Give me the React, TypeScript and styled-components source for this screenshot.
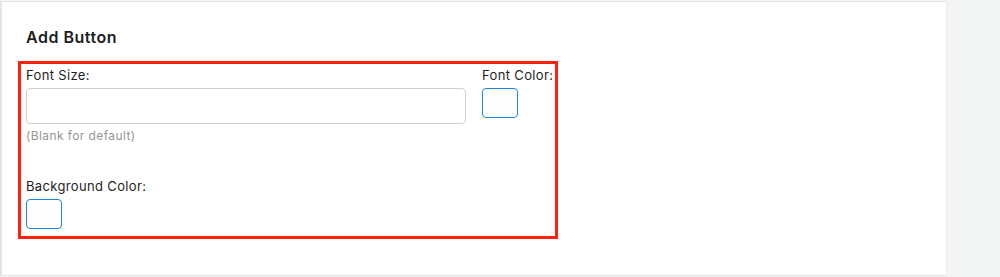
import styled, { createGlobalStyle } from 'styled-components';

const GlobalStyle = createGlobalStyle`
  html, body {
    margin: 0;
    padding: 0;
    background: #f4f5f5;
    font-family: Inter, "Liberation Sans", Arial, sans-serif;
    color: #1e1e1e;
  }
`;

const Page = styled.div`
  display: flex;
  height: 277px;
  padding-top: 1px;
  box-sizing: border-box;
`;

const Card = styled.section`
  width: 946px;
  height: 275px;
  box-sizing: border-box;
  background: #fff;
  border: 1px solid #e2e4e7;
  border-left-width: 2px;
  border-right: none;
  padding: 24px 0 0 16px;
`;

const Title = styled.h2`
  margin: 0 0 13px 8px;
  font-size: 16px;
  font-weight: 600;
  line-height: 22px;
  letter-spacing: 0.5px;
  color: #1e1e1e;
`;

const Highlight = styled.div`
  width: 540px;
  height: 178px;
  box-sizing: border-box;
  border: 3px solid #ff2211;
  padding: 2px 2px 0 5px;
  display: flex;
  gap: 16px;
`;

const Column = styled.div<{ $grow?: boolean }>`
  display: flex;
  flex-direction: column;
  flex: ${(p) => (p.$grow ? '0 0 440px' : '1 1 auto')};
`;

const Label = styled.label<{ $top?: number }>`
  font-size: 13px;
  line-height: 18px;
  letter-spacing: 0.35px;
  margin-top: ${(p) => p.$top ?? 0}px;
  margin-bottom: 4px;
  color: #1e1e1e;
  white-space: nowrap;
`;

const TextInput = styled.input`
  height: 36px;
  box-sizing: border-box;
  border: 1px solid #cfcfcf;
  border-radius: 4px;
  padding: 0 8px;
  font-family: inherit;
  font-size: 13px;
  outline: none;
`;

const Hint = styled.div`
  font-size: 12px;
  line-height: 16px;
  letter-spacing: 0.4px;
  margin-top: 4px;
  color: #959595;
`;

const Swatch = styled.div`
  width: 36px;
  height: 30px;
  box-sizing: border-box;
  border: 1px solid #1a86e0;
  border-radius: 4px;
  background: #fdfdfd;
`;

const Side = styled.div`
  flex: 1;
  background: #f4f5f5;
  box-shadow: inset 2px 0 2px -1px rgba(0, 0, 0, 0.05);
`;

export default function App() {
  return (
    <>
      <GlobalStyle />
      <Page>
        <Card>
          <Title>Add Button</Title>
          <Highlight>
            <Column $grow>
              <Label>Font Size:</Label>
              <TextInput type='text' />
              <Hint>(Blank for default)</Hint>
              <Label $top={33}>Background Color:</Label>
              <Swatch />
            </Column>
            <Column>
              <Label>Font Color:</Label>
              <Swatch />
            </Column>
          </Highlight>
        </Card>
        <Side />
      </Page>
    </>
  );
}
